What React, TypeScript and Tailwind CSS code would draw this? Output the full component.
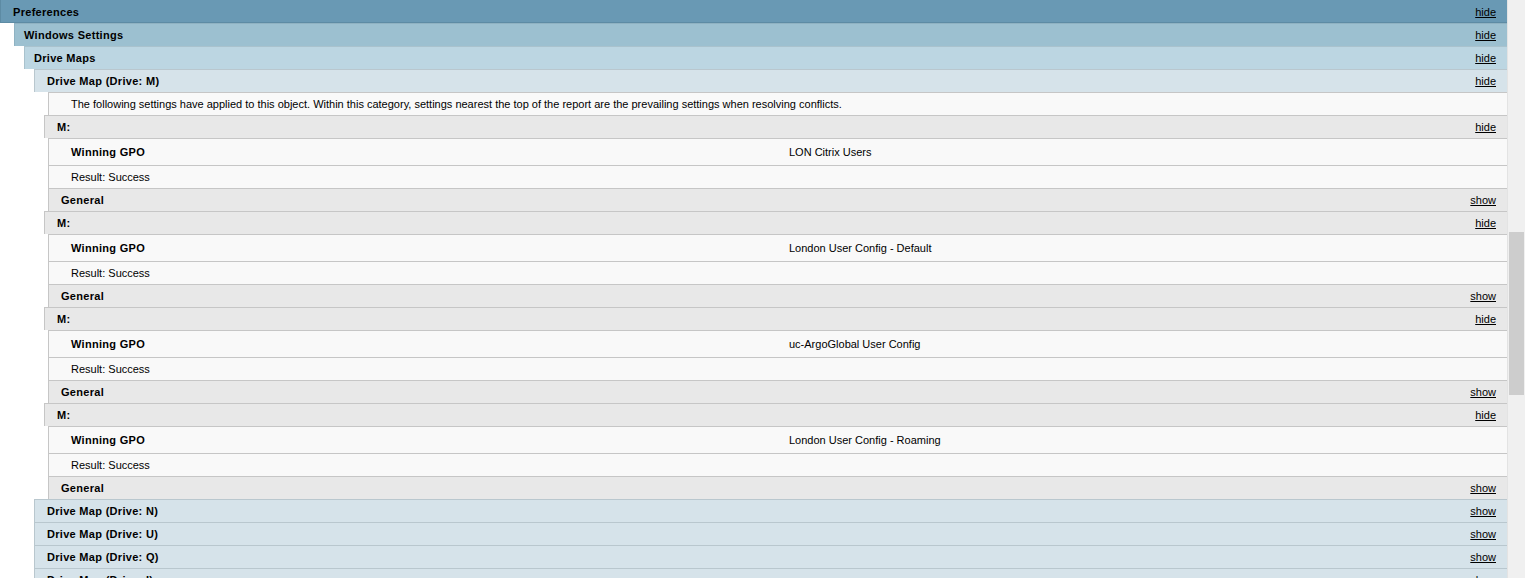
import React from "react";

function Link({ label }: { label: string }) {
  return <span className="underline text-black text-[11px] font-normal tracking-normal">{label}</span>;
}

function HeadRow({
  title,
  link,
  className,
}: {
  title: string;
  link: string;
  className: string;
}) {
  return (
    <div className={"flex h-[23px] items-center justify-between border-t border-l pr-[11px] " + className}>
      <span className="font-bold tracking-[0.3px] text-[11px]">{title}</span>
      <Link label={link} />
    </div>
  );
}

const groups = [
  "LON Citrix Users",
  "London User Config - Default",
  "uc-ArgoGlobal User Config",
  "London User Config - Roaming",
];

function Group({ gpo }: { gpo: string }) {
  return (
    <div>
      <div className="ml-[44px] flex h-[23px] items-center justify-between border-t border-l border-[#c6c6c6] bg-[#e8e8e8] pl-[12px] pr-[11px]">
        <span className="font-bold tracking-[0.3px]">M:</span>
        <Link label="hide" />
      </div>
      <div className="ml-[48px] flex h-[27px] items-center border-t border-l border-[#c6c6c6] bg-[#f9f9f9] pl-[22px]">
        <span className="w-[718px] font-bold tracking-[0.3px]">Winning GPO</span>
        <span>{gpo}</span>
      </div>
      <div className="ml-[48px] flex h-[23px] items-center border-t border-l border-[#c6c6c6] bg-[#f9f9f9] pl-[22px]">
        <span>Result: Success</span>
      </div>
      <div className="ml-[48px] flex h-[23px] items-center justify-between border-t border-l border-[#c6c6c6] bg-[#e8e8e8] pl-[12px] pr-[11px]">
        <span className="font-bold tracking-[0.3px]">General</span>
        <Link label="show" />
      </div>
    </div>
  );
}

export default function App() {
  return (
    <div className="flex h-[578px] w-[1525px] overflow-hidden bg-white font-['Liberation_Sans',Arial,sans-serif] text-[11px] text-black">
      <div className="w-[1507px] shrink-0">
        <div className="flex h-[23px] items-center justify-between border-b border-l border-[#5d8ba4] bg-[#6999b4] pl-[12px] pr-[11px] pt-[3px]">
          <span className="font-bold tracking-[0.3px]">Preferences</span>
          <Link label="hide" />
        </div>
        <div className="ml-[14px]">
          <HeadRow title="Windows Settings" link="hide" className="border-[#8fb2c2] bg-[#9cc0d0] pl-[9px]" />
          <div className="ml-[10px]">
            <HeadRow title="Drive Maps" link="hide" className="border-[#a9c2cd] bg-[#bcd6e2] pl-[9px]" />
            <div className="ml-[10px]">
              <HeadRow title="Drive Map (Drive: M)" link="hide" className="border-[#b9c7ce] bg-[#d6e3ea] pl-[12px]" />
              <div className="-ml-[34px]">
                <div className="ml-[48px] flex h-[23px] items-center border-t border-l border-[#c6c6c6] bg-[#f9f9f9] pl-[22px]">
                  <span>
                    The following settings have applied to this object. Within this category, settings nearest the top of the report are the prevailing settings when resolving conflicts.
                  </span>
                </div>
                {groups.map((g) => (
                  <Group key={g} gpo={g} />
                ))}
              </div>
              <HeadRow title="Drive Map (Drive: N)" link="show" className="border-[#b9c7ce] bg-[#d6e3ea] pl-[12px]" />
              <HeadRow title="Drive Map (Drive: U)" link="show" className="border-[#b9c7ce] bg-[#d6e3ea] pl-[12px]" />
              <HeadRow title="Drive Map (Drive: Q)" link="show" className="border-[#b9c7ce] bg-[#d6e3ea] pl-[12px]" />
              <HeadRow title="Drive Map (Drive: I)" link="show" className="border-[#b9c7ce] bg-[#d6e3ea] pl-[12px]" />
            </div>
          </div>
        </div>
      </div>
      <div className="w-[18px] shrink-0 border-l border-[#e3e3e3] bg-[#f0f0f0] pt-[232px] pl-[1px]">
        <div className="h-[163px] w-[15px] bg-[#cdcdcd]" />
      </div>
    </div>
  );
}
